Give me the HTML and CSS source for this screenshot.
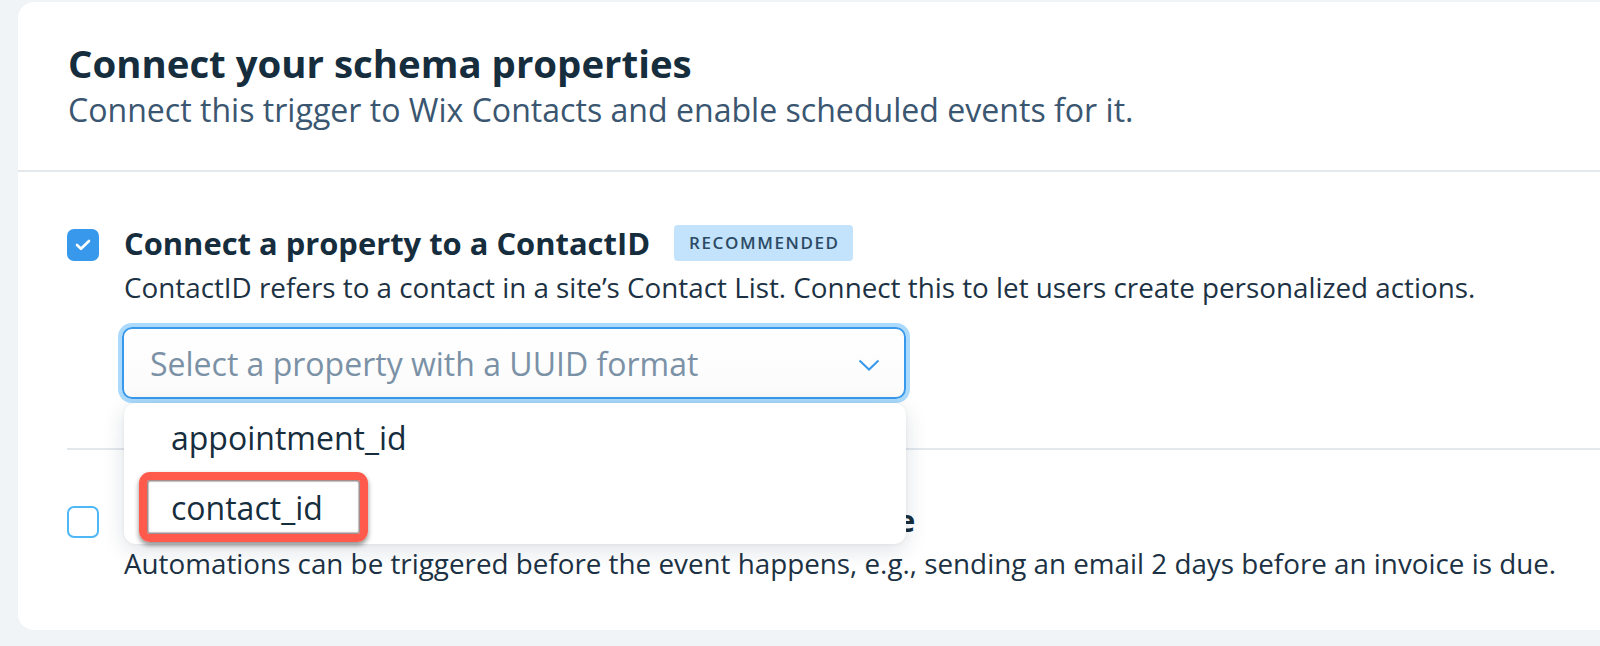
FILE: index.html
```html
<!DOCTYPE html>
<html>
<head>
<meta charset="utf-8">
<link rel="stylesheet" href="styles.css">
</head>
<body>
<div class="page">
  <div class="card">
    <header class="card-header">
      <h1 class="title">Connect your schema properties</h1>
      <p class="subtitle">Connect this trigger to Wix Contacts and enable scheduled events for it.</p>
    </header>
    <div class="card-body">
      <section class="option option-first">
        <div class="checkbox checked">
          <svg width="16" height="12" viewBox="0 0 16 12"><path d="M2 6 L6 9.8 L14 2" fill="none" stroke="#fff" stroke-width="2.6" stroke-linecap="round" stroke-linejoin="round"/></svg>
        </div>
        <div class="option-content">
          <div class="option-title-row">
            <span class="option-title">Connect a property to a ContactID</span>
            <span class="badge">RECOMMENDED</span>
          </div>
          <p class="option-desc">ContactID refers to a contact in a site’s Contact List. Connect this to let users create personalized actions.</p>
          <div class="select-wrap">
            <div class="select">
              <span class="placeholder">Select a property with a UUID format</span>
              <svg class="chevron" width="22" height="12" viewBox="0 0 22 12"><path d="M1.5 1.5 L11 10.5 L20.5 1.5" fill="none" stroke="#3899ec" stroke-width="2"/></svg>
            </div>
            <div class="dropdown">
              <div class="dropdown-item">appointment_id</div>
              <div class="dropdown-item">contact_id</div>
              <div class="highlight"></div>
            </div>
          </div>
        </div>
      </section>
      <section class="option option-second">
        <div class="checkbox"></div>
        <div class="option-content">
          <div class="option-title-row">
            <span class="option-title">Schedule automations to run before the event date</span>
          </div>
          <p class="option-desc">Automations can be triggered before the event happens, e.g., sending an email 2 days before an invoice is due.</p>
        </div>
      </section>
    </div>
  </div>
</div>
</body>
</html>
```

FILE: styles.css
```css
* { box-sizing: border-box; }
html, body {
  margin: 0;
  padding: 0;
  background: #f0f4f7;
  font-family: "Open Sans", "Noto Sans", sans-serif;
  color: #162d3d;
}
.page {
  padding: 2px 0 16px 18px;
  height: 646px;
  overflow: hidden;
}
.card {
  background: #fff;
  border-radius: 16px 0 0 16px;
  height: 628px;
}
.card-header {
  padding: 39px 50px 40px 50px;
  border-bottom: 2px solid #e3e8ed;
}
.title {
  margin: 0;
  font-size: 38.4px;
  line-height: 44px;
  font-weight: 700;
  color: #162d3d;
}
.subtitle {
  margin: 5px 0 0 0;
  font-size: 32.1px;
  line-height: 40px;
  font-weight: 400;
  color: #3a5670;
}
.card-body {
  padding: 0 0 0 49px;
}
.option {
  display: flex;
  gap: 25px;
}
.option-first {
  padding-top: 53px;
  padding-bottom: 49px;
}
.option-second {
  border-top: 2px solid #e3e8ed;
  padding-top: 52px;
}
.checkbox {
  flex: 0 0 32px;
  width: 32px;
  height: 32px;
  margin-top: 4px;
  border-radius: 7px;
  border: 2.5px solid #4eb7f5;
  background: #fff;
  display: flex;
  align-items: center;
  justify-content: center;
}
.checkbox.checked {
  background: #3899ec;
  border-color: #3899ec;
}
.option-content {
  flex: 1;
  min-width: 0;
}
.option-title-row {
  display: flex;
  align-items: center;
  gap: 24px;
  height: 36px;
}
.option-title {
  font-size: 30.9px;
  line-height: 36px;
  font-weight: 700;
  color: #162d3d;
  white-space: nowrap;
}
.badge {
  background: #c3e3fc;
  color: #2c4a64;
  font-size: 17px;
  font-weight: 600;
  letter-spacing: 1.6px;
  line-height: 36px;
  height: 36px;
  padding: 0 13px 0 15px;
  border-radius: 4px;
}
.option-desc {
  margin: 8px 0 0 0;
  font-size: 27.8px;
  line-height: 34px;
  color: #1c3244;
  white-space: nowrap;
}
.option-first .option-desc {
  margin-top: 9px;
}
.select-wrap {
  position: relative;
  width: 784px;
  margin: 23px 0 0 -2px;
}
.select {
  height: 72px;
  border: 2px solid #3899ec;
  border-radius: 10px;
  box-shadow: 0 0 0 4px #abdafc;
  background: linear-gradient(#fff, #fbfbfc);
  display: flex;
  align-items: center;
  justify-content: space-between;
  padding: 0 24px 0 26px;
}
.placeholder {
  font-size: 32px;
  color: #7b91a6;
  line-height: 40px;
  margin-top: 2px;
}
.chevron {
  display: block;
  margin-top: 3px;
}
.dropdown {
  position: absolute;
  top: 76px;
  left: 2px;
  right: 0;
  background: #fff;
  border-radius: 12px;
  box-shadow: 0 6px 22px rgba(22, 45, 61, 0.14), 0 0 4px rgba(22, 45, 61, 0.06);
  padding-bottom: 1px;
  z-index: 5;
}
.dropdown-item {
  height: 70px;
  line-height: 70px;
  font-size: 32px;
  padding-left: 47px;
  color: #162d3d;
}
.highlight {
  position: absolute;
  left: 15px;
  top: 69px;
  width: 229px;
  height: 70px;
  border: 8px solid #ff5a4c;
  border-radius: 11px;
  box-shadow: inset 0 0 1px 1.5px rgba(70, 40, 40, 0.55), 0 3px 5px rgba(0, 0, 0, 0.45);
}
```
